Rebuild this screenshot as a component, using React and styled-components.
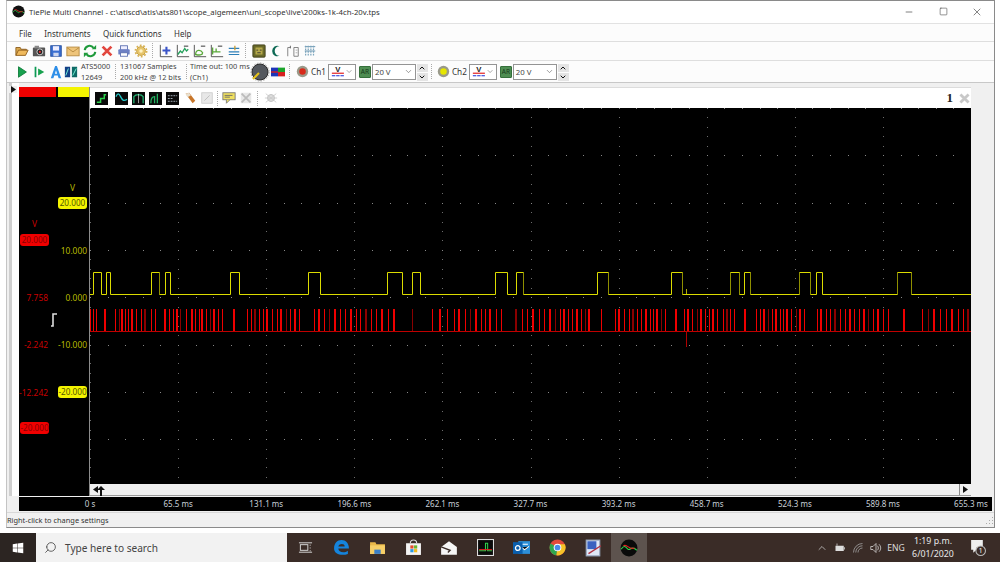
import React from 'react';
import styled, { createGlobalStyle } from 'styled-components';
import { FaWindows } from 'react-icons/fa';
import { ChevronDown, ChevronUp, Search, Minus, Square, X } from 'lucide-react';

const Global = createGlobalStyle`
  html, body { margin: 0; padding: 0; background: #fff; }
  body { font-family: "Noto Sans", "Liberation Sans", sans-serif; font-size: 8px; color: #222; }
`;

const Page = styled.div`
  width: 1000px;
  height: 562px;
  overflow: hidden;
  display: flex;
  flex-direction: column;
  background: #fff;
`;

const Desktop = styled.div`
  flex: 1;
  padding: 0 5px 5px 6px;
  min-height: 0;
  display: flex;
`;

const Win = styled.div`
  flex: 1;
  min-width: 0;
  display: flex;
  flex-direction: column;
  background: #f0f0f0;
  border-right: 1px solid #8a8a8a;
  border-bottom: 1px solid #8a8a8a;
  border-top: 1px solid #8a8a8a;
  border-left: 1px solid #c4c4c4;
`;

const TitleBar = styled.div`
  height: 22px;
  box-sizing: border-box;
  padding: 0 0 1px 5px;
  background: #fff;
  display: flex;
  align-items: center;
  font-size: 7.75px;
  color: #333;
`;

const TitleText = styled.span`
  margin-left: 4px;
  flex: 1;
  white-space: nowrap;
`;

const WinButton = styled.div`
  width: 34px;
  display: flex;
  justify-content: center;
  color: #333;
`;

const MenuBar = styled.div`
  height: 18px;
  box-sizing: border-box;
  padding: 1px 0 0 12px;
  background: #fcfcfc;
  border-top: 1px solid #e2e2e2;
  display: flex;
  align-items: center;
  gap: 12.5px;
  font-size: 8px;
  color: #333;
`;

const ToolRow = styled.div`
  height: ${p => p.$h}px;
  background: #fcfcfc;
  border-top: 1px solid #dedede;
  border-bottom: ${p => (p.$last ? '1px solid #c8c8c8' : '0')};
  display: flex;
  align-items: center;
  padding: 0 0 ${p => (p.$last ? 0 : 1)}px 6px;
  box-sizing: border-box;
`;

const Cell = styled.div`
  width: ${p => p.$w || 17}px;
  height: 16px;
  display: flex;
  align-items: center;
  justify-content: center;
  flex: none;
`;

const Grip = styled.div`
  width: 1px;
  height: 15px;
  margin: 0 ${p => p.$m || 3}px;
  border-left: 1px dotted #aaa;
  flex: none;
`;

const InfoBlock = styled.div`
  font-size: 7.4px;
  line-height: 10.5px;
  color: #444;
  white-space: nowrap;
  flex: none;
  width: ${p => p.$w}px;
  margin-left: ${p => p.$ml}px;
`;

const ChannelLabel = styled.span`
  font-size: 8.2px;
  color: #333;
  margin: 0 2px 0 1px;
  flex: none;
`;

const Select = styled.div`
  width: ${p => p.$w}px;
  height: 16px;
  box-sizing: border-box;
  border: 1px solid #949494;
  background: #fff;
  display: flex;
  align-items: center;
  justify-content: space-between;
  padding: 0 2px;
  margin-right: 1px;
  font-size: 7.8px;
  color: #444;
  flex: none;
`;

const AutoRange = styled.div`
  width: 12px;
  height: 12px;
  margin: 0 1px 0 2px;
  background: #4e8d52;
  border: 1px solid #35703b;
  box-sizing: border-box;
  border-radius: 1px;
  font-size: 6.5px;
  line-height: 10px;
  text-align: center;
  color: #173a1c;
  flex: none;
`;

const Spinner = styled.div`
  width: 11px;
  height: 16px;
  display: flex;
  flex-direction: column;
  gap: 1px;
  flex: none;
`;

const SpinButton = styled.div`
  flex: 1;
  background: #e4e4e4;
  display: flex;
  align-items: center;
  justify-content: center;
  color: #111;
`;

const Workspace = styled.div`
  flex: 1;
  min-height: 0;
  display: flex;
  align-items: stretch;
`;

const Dock = styled.div`
  width: 12px;
  position: relative;
  flex: none;
  background: linear-gradient(90deg, #f0f0f0 0 2px, #cfcfcf 2px 5px, #fff 5px 12px);
`;

const DockArrow = styled.div`
  position: absolute;
  top: 3px;
  left: 2px;
  width: 8px;
  height: 7px;
  background: #f0f0f0;
  display: flex;
  align-items: center;
  justify-content: center;
`;

const ScaleColumn = styled.div`
  width: 71px;
  flex: none;
  background: #000;
  position: relative;
  border-right: 1px solid #8c8c8c;
  box-sizing: border-box;
  margin-top: 4px;
`;

const ColorTabs = styled.div`
  display: flex;
  height: 10px;
  gap: 2px;
`;

const ColorTab = styled.div`
  background: ${p => p.$c};
  flex: ${p => p.$f};
`;

const ScaleText = styled.span`
  position: absolute;
  top: ${p => p.$y - 87 - 5}px;
  right: ${p => 89 - p.$r}px;
  line-height: 12px;
  font-size: 8.4px;
  white-space: nowrap;
  color: ${p => (p.$red ? '#c80000' : '#b9b900')};
`;

const ScalePill = styled.span`
  position: absolute;
  top: ${p => p.$y - 87 - 5}px;
  left: ${p => p.$x - 19}px;
  width: 29px;
  height: 12px;
  box-sizing: border-box;
  border-radius: 3px;
  background: ${p => (p.$red ? '#f00000' : '#f4f400')};
  color: ${p => (p.$red ? '#8a0000' : '#555500')};
  font-size: 8.2px;
  line-height: 12px;
  text-align: center;
  white-space: nowrap;
`;

const TriggerMark = styled.svg`
  position: absolute;
  left: ${50 - 19}px;
  top: ${313 - 87}px;
`;

const PlotColumn = styled.div`
  width: 881px;
  flex: none;
  display: flex;
  flex-direction: column;
  margin-top: 4px;
`;

const PlotTools = styled.div`
  height: 21px;
  flex: none;
  background: #fff;
  border-top: 1px solid #dcdcdc;
  display: flex;
  align-items: center;
  padding-left: 3px;
  box-sizing: border-box;
`;

const PlotIndex = styled.span`
  margin-left: auto;
  font-family: "Liberation Serif", serif;
  font-weight: 700;
  font-size: 13px;
  color: #222;
  margin-right: 4px;
`;

const Plot = styled.svg`
  display: block;
  width: 881px;
  height: 376px;
  flex: none;
  background: #000;
`;

const ScrollBar = styled.div`
  height: 12px;
  flex: none;
  background: #f0f0f0;
  border-bottom: 1px solid #9a9a9a;
  position: relative;
  display: flex;
  justify-content: space-between;
  align-items: center;
  box-sizing: border-box;
`;

const ScrollEnd = styled.div`
  width: ${p => p.$w}px;
  height: 11px;
  display: flex;
  align-items: center;
  justify-content: center;
  border-left: ${p => (p.$b ? '1px solid #8a8a8a' : '0')};
`;

const Marker = styled.svg`
  position: absolute;
  left: 7px;
  top: 2px;
`;

const AxisRow = styled.div`
  height: 14px;
  flex: none;
  margin: 1px 2px 0 12px;
  background: #000;
  display: flex;
  padding-left: 27px;
  overflow: hidden;
`;

const AxisLabel = styled.span`
  width: 88.1px;
  flex: none;
  text-align: center;
  color: #c8d0d8;
  font-size: 8px;
  line-height: 14px;
  white-space: nowrap;
`;

const StatusBar = styled.div`
  height: 14px;
  flex: none;
  margin-top: 1px;
  border-top: 1px solid #d8d8d8;
  display: flex;
  align-items: center;
  justify-content: space-between;
  font-size: 7.4px;
  color: #333;
`;

const TaskBar = styled.div`
  height: 29px;
  flex: none;
  background: #3a2c27;
  display: flex;
  align-items: center;
  color: #eee;
`;

const StartButton = styled.div`
  width: 36px;
  height: 100%;
  background: #2c2522;
  display: flex;
  align-items: center;
  justify-content: center;
  color: #fff;
  flex: none;
`;

const SearchBox = styled.div`
  width: 251px;
  height: 100%;
  background: #f2f2f2;
  display: flex;
  align-items: center;
  padding-left: 8px;
  box-sizing: border-box;
  gap: 8px;
  color: #444;
  font-size: 10.1px;
  flex: none;
`;

const SearchGlass = styled(Search)`
  transform: scaleX(-1);
`;

const TaskApps = styled.div`
  display: flex;
  height: 100%;
  flex: 1;
`;

const TaskApp = styled.div`
  width: 36px;
  height: 100%;
  display: flex;
  align-items: center;
  justify-content: center;
  background: ${p => (p.$active ? '#5d534e' : 'transparent')};
`;

const Tray = styled.div`
  display: flex;
  align-items: center;
  height: 100%;
  width: 187px;
  flex: none;
`;

const TrayIcon = styled.div`
  width: 18px;
  display: flex;
  justify-content: center;
  flex: none;
  margin-left: ${p => p.$ml || 0}px;
`;

const TrayLang = styled.span`
  font-size: 8.6px;
  width: 22px;
  text-align: center;
  color: #ddd;
  flex: none;
`;

const Clock = styled.div`
  width: 52px;
  text-align: center;
  font-size: 8.8px;
  line-height: 13px;
  color: #e8e8e8;
  flex: none;
`;

const Svg = ({ children, s = 14 }) => (
  <svg width={s} height={s} viewBox="0 0 16 16">{children}</svg>
);

const OpenIcon = () => <Svg><path d="M1 13V4h5l1 2h6v2" fill="#d9a94f" stroke="#8a5a1a" /><path d="M1 13l3-6h11l-3 6z" fill="#efb95c" stroke="#8a5a1a" /></Svg>;
const CameraIcon = () => <Svg><rect x="1" y="4" width="14" height="10" rx="1" fill="#555" /><rect x="3" y="2" width="5" height="3" fill="#888" /><circle cx="9" cy="9" r="3.4" fill="#222" stroke="#ddd" /><circle cx="9" cy="9" r="1.2" fill="#d33" /></Svg>;
const SaveIcon = () => <Svg><rect x="2" y="2" width="12" height="12" fill="#3b6fd0" stroke="#1f4a9c" /><rect x="4.5" y="2.5" width="7" height="5" fill="#eef" /><rect x="5" y="10" width="6" height="4" fill="#cfd8ee" /></Svg>;
const MailIcon = () => <Svg><rect x="1" y="3.5" width="14" height="10" fill="#eec47a" stroke="#b5893f" /><path d="M1 4l7 5 7-5" fill="none" stroke="#b5893f" /></Svg>;
const RefreshIcon = () => <Svg><path d="M2 7a5.5 5.5 0 0 1 10-2.5M14 9a5.5 5.5 0 0 1-10 2.5" fill="none" stroke="#1f9a3c" strokeWidth="2.4" /><path d="M10 6h5V1zM6 10H1v5z" fill="#1f9a3c" /></Svg>;
const CrossIcon = () => <Svg><path d="M3 3l10 10M13 3L3 13" stroke="#e2473f" strokeWidth="3.2" /></Svg>;
const PrintIcon = () => <Svg><rect x="4" y="2" width="8" height="5" fill="#eef" stroke="#5b6fb0" /><rect x="1.5" y="6" width="13" height="6" rx="1" fill="#6d80c4" /><rect x="4" y="10" width="8" height="4" fill="#fff" stroke="#5b6fb0" /></Svg>;
const GearIcon = () => <Svg><circle cx="8" cy="8" r="5" fill="#e8c66c" stroke="#c09a3c" strokeWidth="1" /><circle cx="8" cy="8" r="6.4" fill="none" stroke="#d8b050" strokeWidth="2" strokeDasharray="2 2" /><circle cx="8" cy="8" r="2" fill="#fff3c4" /></Svg>;
const PlusIcon = () => <Svg><path d="M1.5 1v13.5H15" fill="none" stroke="#444" /><path d="M8.5 3v9M4 7.5h9" stroke="#3b55c8" strokeWidth="2.4" /></Svg>;
const ChartIcon = ({ c = '#22a05a', d = 'M2 12l3-4 2 2 3-5 2 3 2-2' }) => <Svg><path d="M1.5 1v13.5H15" fill="none" stroke="#444" /><path d={d} fill="none" stroke={c} strokeWidth="1.5" /><path d="M9 2.5h5" stroke="#666" strokeWidth="1.5" /></Svg>;
const SlidersIcon = () => <Svg><path d="M2 5h12M2 9h12M2 12h12" stroke="#2c7fb8" strokeWidth="1.3" /><path d="M9 2v5" stroke="#c89a30" strokeWidth="1.5" /></Svg>;
const ChipIcon = () => <Svg><rect x="1" y="1" width="14" height="14" rx="1" fill="#6a6a2a" stroke="#3c3c18" /><rect x="4" y="4" width="8" height="8" fill="#b5a94a" /><path d="M5 7h2M9 7h2M6 10h4" stroke="#333" /></Svg>;
const MoonIcon = () => <Svg><path d="M12 2.5a6 6 0 1 0 0 11 5 5 0 0 1 0-11z" fill="#0e6a55" /></Svg>;
const GateIcon = () => <Svg><path d="M2 14V4h3M9 4h5v10H9z" fill="none" stroke="#777" /><path d="M5 2v3" stroke="#555" /><path d="M11 7h2M11 10h2" stroke="#aaa" /></Svg>;
const BusIcon = () => <Svg><path d="M2 3h12M2 8h12" stroke="#5a8aa8" strokeWidth="1" /><path d="M3 2v11M6 2v11M9 2v11M12 2v11" stroke="#7ba5bd" strokeWidth="1.4" strokeDasharray="2 1" /></Svg>;
const PlayIcon = () => <Svg><path d="M4 2l9 6-9 6z" fill="#17a14e" stroke="#0d7a38" /></Svg>;
const StepIcon = () => <Svg><path d="M4 2v12" stroke="#0d9a55" strokeWidth="2" /><path d="M7 4l7 4-7 4z" fill="#17a14e" /></Svg>;
const AutoIcon = () => <Svg><path d="M2 15L7 1h2l5 14h-3L8 6l-3 9zM5 10h6v2H5z" fill="#2f8fe8" /></Svg>;
const ModeIcon = () => <Svg><rect x="1" y="2" width="6" height="12" fill="#123f86" /><rect x="9" y="2" width="6" height="12" fill="#0f6a66" /><path d="M2 12l3-8M10 12l4-8" stroke="#7fd" /></Svg>;
const KnobIcon = () => <svg width="20" height="20" viewBox="0 0 20 20"><circle cx="10" cy="10" r="8" fill="#54585e" stroke="#2a2a2a" /><circle cx="10" cy="10" r="9" fill="none" stroke="#999" strokeDasharray="1.5 1.5" /><path d="M3 17l6-6" stroke="#e6c21a" strokeWidth="2" /></svg>;
const TriColor = () => <Svg><rect x="0" y="3" width="8" height="10" fill="#1d35b8" /><rect x="8" y="3" width="8" height="5" fill="#1ca52c" /><rect x="8" y="8" width="8" height="5" fill="#d82020" /><path d="M0 8h8" stroke="#d82020" strokeWidth="1.6" /></Svg>;
const Led = ({ c }) => <Svg s={13}><circle cx="8" cy="8" r="7" fill="#9a9a8a" /><circle cx="8" cy="8" r="4" fill={c} /></Svg>;
const VoltIcon = () => <Svg s={15}><text x="8" y="8" textAnchor="middle" fontSize="9" fontWeight="700" fontFamily="Liberation Sans, sans-serif" fill="#222">V</text><path d="M1 10h14" stroke="#e01010" strokeWidth="1.3" /><path d="M1 13h4M6 13h4M11 13h4" stroke="#1b2fd8" strokeWidth="1.3" /></Svg>;

const Scope = ({ children }) => <svg width="13" height="13" viewBox="0 0 14 14"><rect width="14" height="14" fill="#0a0a0a" />{children}</svg>;
const plotTools = [
  <Scope><path d="M2 11h4V7h4V3h2" fill="none" stroke="#2bd04a" strokeWidth="1.6" /></Scope>,
  null,
  <Scope><path d="M1 5c2-4 3-4 5 0s3 5 7 3" fill="none" stroke="#25c8c8" strokeWidth="1.4" /></Scope>,
  <Scope><path d="M2 12V5c2-3 8-3 10 0v7" fill="none" stroke="#22b070" strokeWidth="1.4" /><path d="M7 2v10" stroke="#eee" strokeWidth=".7" /></Scope>,
  <Scope><path d="M2 12c0-5 2-7 4-7v7M9 2v10" fill="none" stroke="#22b060" strokeWidth="1.4" /></Scope>,
  <Scope><path d="M2 4h10M2 7h6M2 10h10" stroke="#aab4c0" strokeDasharray="2 1" /></Scope>,
  <Svg><path d="M3 3l4-1 7 9-3 3z" fill="#c8762a" /><path d="M3 3l4-1 2 3-4 2z" fill="#e8e0d0" /></Svg>,
  <Svg><rect x="2" y="2" width="12" height="12" fill="#e8e8e8" stroke="#ccc" /><path d="M5 11l6-6" stroke="#bbb" /></Svg>,
  1.5,
  <Svg><rect x="1" y="2" width="14" height="8" fill="#f0e060" stroke="#777" /><path d="M5 10v4l4-4" fill="#f0e060" stroke="#777" /><path d="M3 5h9M3 7h6" stroke="#666" /></Svg>,
  <Svg><rect x="2" y="2" width="12" height="12" fill="#e8e8e8" /><path d="M3 3l10 10M13 3L3 13" stroke="#bcbcbc" strokeWidth="2" /></Svg>,
  3,
  <Svg><circle cx="8" cy="8" r="4" fill="#ddd" stroke="#bbb" /><path d="M2 3l12 10M14 3L2 13M1 8h14" stroke="#ccc" /></Svg>,
];

const axisLabels = ['0 s', '65.5 ms', '131.1 ms', '196.6 ms', '262.1 ms', '327.7 ms', '393.2 ms', '458.7 ms', '524.3 ms', '589.8 ms', '655.3 ms'];

// x positions read from the trace, grouped by the crop they came from
const redA = [16,24,34,61,91,101,110,120,130,140,153,168,180,198,211,241,252,265,275,285,302,320,331,341,352,362,375,388,400,410,447,485,497,510,522,535,547,561,575,588,602,616,630,643,686,702,717,732,750,766,781,797,812,826,842,857,873,890].map(v => 85 + v / 3);
const redB = [7,23,41,96,157,180,201,221,238,255,271,287,302,316,331,347,362,409,425,441,458,476,493,511,524,540,552,565,577,590,603,616,627,664,704,718,733,746,759,772,784,797,810,820,831,842,854,888].map(v => 380 + v / 3);
const redC = [3,28,40,52,65,78,90,101,113,125,145,156,166,177,210,243,256,268,280,292,303,314,325,336,349,362,374,388,425,438,453,466,481,496,511,524,538,552,566,580,594,610,625,638,686,740,758,776,796,814,830,848,865,880].map(v => 675 + v / 3);
const spikes = [...redA, ...redB, ...redC];

const edges = [93,101,106,110,151,159,165,170,230,239,308,320,387,402,412,420,495,507,516,523,597,608,671,682,730,739,744,750,799,810,816,822,897,911];
const dimEdges = [159, 523, 608, 682, 730, 739, 750, 799, 810, 897, 911];
const LOW = 294.5;
const HIGH = 272.5;
const yellowPoints = () => {
  const pts = [`90,${LOW}`];
  edges.forEach((e, i) => {
    const x = e + 0.5;
    const rising = i % 2 === 0;
    pts.push(`${x},${rising ? LOW : HIGH}`, `${x},${rising ? HIGH : LOW}`);
  });
  pts.push(`971,${LOW}`);
  return pts.join(' ');
};

const GridDots = () => {
  const dots = [];
  for (let i = 0; i <= 10; i++) {
    const x = Math.round(90 + 88.1 * i);
    for (let k = 0; k <= 40; k++) {
      dots.push(<rect key={`v${i}-${k}`} x={x} y={Math.round(108 + 9.46 * k)} width="1" height="1" fill="#6c6c6c" />);
    }
  }
  for (let j = 0; j <= 8; j++) {
    const y = Math.round(108 + 47.3 * j);
    for (let k = 0; k <= 50; k++) {
      dots.push(<rect key={`h${j}-${k}`} x={Math.round(90 + 17.62 * k)} y={y} width="1" height="1" fill="#888" />);
    }
  }
  return dots;
};

const Traces = () => (
  <g>
    <GridDots />
    <polyline points={yellowPoints()} fill="none" stroke="#dcdc00" strokeWidth="1" />
    {dimEdges.map(x => <path key={x} d={`M${x + 0.5} ${HIGH}V${LOW}`} stroke="#8f8f00" />)}
    <path d="M686.5 294V289" stroke="#b0b000" />
    <path d="M90 331.5H971" stroke="#c00000" strokeWidth="1" />
    <path d="M686.5 331V347" stroke="#b00000" />
    {spikes.map((x, i) => {
      const wide = i % 3 === 0;
      return (
        <path
          key={i}
          d={`M${Math.round(x) + (wide ? 0 : 0.5)} 331V309`}
          stroke={i % 7 === 5 ? '#8a0000' : '#f00000'}
          strokeWidth={wide ? 2 : 1}
        />
      );
    })}
  </g>
);

const ChromeIcon = () => <Svg s={17}><circle cx="8" cy="8" r="7.5" fill="#e24a3b" /><path d="M8 8L1.5 4.2A7.5 7.5 0 0 0 7 15.4z" fill="#2fa84f" /><path d="M8 8l-1 7.4A7.5 7.5 0 0 0 15 5H8z" fill="#f6c328" /><circle cx="8" cy="8" r="3.6" fill="#fff" /><circle cx="8" cy="8" r="2.7" fill="#4a8be8" /></Svg>;
const taskApps = [
  <Svg s={15}><path d="M1 3h14M1 13h14" stroke="#ddd" /><rect x="2.5" y="5" width="8" height="6" fill="none" stroke="#ddd" /><path d="M13 5v1M13 8v1M13 11v1" stroke="#ddd" /></Svg>,
  <Svg s={17}><path d="M1 9c0-5 3-8 7-8s7 3 7 8H5c0 3 5 5 9 2v3c-5 2-13 1-13-5zM5 7h6c0-3-5-3-6 0z" fill="#1584dc" /></Svg>,
  <Svg s={17}><path d="M1 3h5l1 2h8v9H1z" fill="#eab84a" /><rect x="1" y="6" width="14" height="8" fill="#f6cf68" /><rect x="5" y="10" width="6" height="4" fill="#3a7fc8" /></Svg>,
  <Svg s={17}><rect x="1" y="4" width="14" height="11" fill="#f4f4f4" /><path d="M5 4c0-4 6-4 6 0" fill="none" stroke="#ddd" /><rect x="5" y="6" width="3" height="3" fill="#e24a2a" /><rect x="8.5" y="6" width="3" height="3" fill="#6ab42a" /><rect x="5" y="9.5" width="3" height="3" fill="#2a9ae2" /><rect x="8.5" y="9.5" width="3" height="3" fill="#f2b81a" /></Svg>,
  <Svg s={18}><path d="M1 7l7-5 7 5v7H1z" fill="#f6f6f6" /><path d="M1 7l8 3-2 2" fill="none" stroke="#3a2c27" strokeWidth="1.2" /></Svg>,
  <Svg s={17}><rect x=".5" y=".5" width="15" height="15" fill="#0a0a0a" stroke="#ddd" /><path d="M2 11h6V4h2v7h4" fill="none" stroke="#2bd04a" /><path d="M2 10h12" stroke="#e02020" /></Svg>,
  <Svg s={17}><rect x="5" y="2" width="11" height="12" fill="#2d8fd8" /><path d="M8 5h6M8 8l3 2 4-3" stroke="#fff" /><rect x="0" y="3" width="9" height="11" fill="#0a5fae" /><circle cx="4.5" cy="8.5" r="2.2" fill="none" stroke="#fff" strokeWidth="1.2" /></Svg>,
  <ChromeIcon />,
  <Svg s={18}><rect x="2" y="1" width="12" height="14" fill="#dfe8f6" stroke="#9aa8c0" /><path d="M3 2h8v7H3z" fill="#3a62c0" /><path d="M4 13L15 6" stroke="#b03040" strokeWidth="1.2" /></Svg>,
  <Svg s={18}><circle cx="8" cy="8" r="7.5" fill="#0a0a0a" /><path d="M1 9c3-4 4-2 6 0s3-4 8 1" fill="none" stroke="#2bd04a" /><path d="M3 6c3-2 5 4 10 2" fill="none" stroke="#e02020" /></Svg>,
];

const SelectArrow = () => <ChevronDown size={9} strokeWidth={1.5} color="#555" />;

const Channel = ({ name, led }) => (
  <>
    <Cell $w={15}><Led c={led} /></Cell>
    <ChannelLabel>{name}</ChannelLabel>
    <Select $w={28}><VoltIcon /><SelectArrow /></Select>
    <AutoRange>AR</AutoRange>
    <Select $w={44}>20 V<SelectArrow /></Select>
    <Spinner>
      <SpinButton><ChevronUp size={8} strokeWidth={3} /></SpinButton>
      <SpinButton><ChevronDown size={8} strokeWidth={3} /></SpinButton>
    </Spinner>
  </>
);

export default function App() {
  const row1 = [OpenIcon, CameraIcon, SaveIcon, MailIcon, RefreshIcon, CrossIcon, PrintIcon, GearIcon];
  return (
    <Page>
      <Global />
      <Desktop>
        <Win>
          <TitleBar>
            <Svg s={13}><circle cx="8" cy="8" r="7.5" fill="#111" /><path d="M1 9c3-4 4-2 6 0s3-4 8 1" fill="none" stroke="#2bd04a" /><path d="M3 6c3-2 5 4 10 2" fill="none" stroke="#e02020" /></Svg>
            <TitleText>TiePie Multi Channel - c:\atiscd\atis\ats801\scope_algemeen\uni_scope\live\200ks-1k-4ch-20v.tps</TitleText>
            <WinButton><Minus size={10} strokeWidth={1.5} /></WinButton>
            <WinButton><Square size={9} strokeWidth={1.4} /></WinButton>
            <WinButton><X size={12} strokeWidth={1.2} /></WinButton>
          </TitleBar>
          <MenuBar>
            <span>File</span>
            <span>Instruments</span>
            <span>Quick functions</span>
            <span>Help</span>
          </MenuBar>
          <ToolRow $h={19}>
            {row1.map((I, i) => <Cell key={i}><I /></Cell>)}
            <Grip />
            <Cell><PlusIcon /></Cell>
            <Cell><ChartIcon /></Cell>
            <Cell><ChartIcon c="#5aa83a" d="M3 12c0-6 6-6 8-2 0 3-4 3-8 2z" /></Cell>
            <Cell><ChartIcon c="#5aa83a" d="M3 12V4M3 9h4V5M7 9h5" /></Cell>
            <Cell><SlidersIcon /></Cell>
            <Grip />
            <Cell><ChipIcon /></Cell>
            <Cell><MoonIcon /></Cell>
            <Cell><GateIcon /></Cell>
            <Cell><BusIcon /></Cell>
          </ToolRow>
          <ToolRow $h={23} $last>
            <Cell><PlayIcon /></Cell>
            <Cell><StepIcon /></Cell>
            <Cell><AutoIcon /></Cell>
            <Cell $w={14}><ModeIcon /></Cell>
            <InfoBlock $w={33} $ml={3}>ATS5000<br />12649</InfoBlock>
            <Grip $m={1} />
            <InfoBlock $w={65} $ml={2}>131067 Samples<br />200 kHz @ 12 bits</InfoBlock>
            <Grip $m={1} />
            <InfoBlock $w={59} $ml={1}>Time out: 100 ms<br />(Ch1)</InfoBlock>
            <Cell $w={22}><KnobIcon /></Cell>
            <Cell $w={14}><TriColor /></Cell>
            <Grip $m={4} />
            <Channel name="Ch1" led="#d82a1a" />
            <Grip $m={3} />
            <Channel name="Ch2" led="#e6e600" />
          </ToolRow>
          <Workspace>
            <Dock>
              <DockArrow><svg width="5" height="7" viewBox="0 0 5 7"><path d="M0 0l5 3.5L0 7z" fill="#111" /></svg></DockArrow>
            </Dock>
            <ScaleColumn>
              <ColorTabs>
                <ColorTab $c="#f00000" $f="37" />
                <ColorTab $c="#f4f400" $f="31" />
              </ColorTabs>
              <ScaleText $y={187} $r={75}>V</ScaleText>
              <ScalePill $x={58} $y={202}>20.000</ScalePill>
              <ScaleText $y={223} $r={37} $red>V</ScaleText>
              <ScalePill $x={20} $y={239} $red>20.000</ScalePill>
              <ScaleText $y={250} $r={87}>10.000</ScaleText>
              <ScaleText $y={297} $r={87}>0.000</ScaleText>
              <ScaleText $y={297} $r={48} $red>7.758</ScaleText>
              <TriggerMark width="8" height="14" viewBox="0 0 8 14"><path d="M1 13h2V1h4" fill="none" stroke="#ddd" strokeWidth="1.6" /></TriggerMark>
              <ScaleText $y={344} $r={87}>-10.000</ScaleText>
              <ScaleText $y={344} $r={48} $red>-2.242</ScaleText>
              <ScalePill $x={58} $y={391}>-20.000</ScalePill>
              <ScaleText $y={392} $r={48} $red>-12.242</ScaleText>
              <ScalePill $x={20} $y={427} $red>-20.000</ScalePill>
            </ScaleColumn>
            <PlotColumn>
              <PlotTools>
                {plotTools.map((t, i) => {
                  if (t === null) return <Cell key={i} $w={3} />;
                  if (typeof t === 'number') return <Grip key={i} $m={t} />;
                  return <Cell key={i}>{t}</Cell>;
                })}
                <PlotIndex>1</PlotIndex>
                <Cell $w={14}><Svg s={13}><path d="M3 3l10 10M13 3L3 13" stroke="#c8c8c8" strokeWidth="3.4" /></Svg></Cell>
              </PlotTools>
              <Plot viewBox="90 108 881 376"><Traces /></Plot>
              <ScrollBar>
                <ScrollEnd $w={10}><svg width="5" height="7" viewBox="0 0 5 7"><path d="M5 0L0 3.5 5 7z" fill="#111" /></svg></ScrollEnd>
                <Marker width="8" height="10" viewBox="0 0 8 10"><path d="M4 0l4 4H5v6H3V4H0z" fill="#111" /></Marker>
                <ScrollEnd $w={11} $b><svg width="5" height="7" viewBox="0 0 5 7"><path d="M0 0l5 3.5L0 7z" fill="#111" /></svg></ScrollEnd>
              </ScrollBar>
            </PlotColumn>
          </Workspace>
          <AxisRow>
            {axisLabels.map(l => <AxisLabel key={l}>{l}</AxisLabel>)}
          </AxisRow>
          <StatusBar>
            Right-click to change settings
            <svg width="10" height="10" viewBox="0 0 10 10"><path d="M8 2h1v1H8zM5 5h1v1H5zM8 5h1v1H8zM2 8h1v1H2zM5 8h1v1H5zM8 8h1v1H8z" fill="#aaa" /></svg>
          </StatusBar>
        </Win>
      </Desktop>
      <TaskBar>
        <StartButton><FaWindows size={12} /></StartButton>
        <SearchBox>
          <SearchGlass size={13} strokeWidth={1.5} />
          Type here to search
        </SearchBox>
        <TaskApps>
          {taskApps.map((a, i) => <TaskApp key={i} $active={i === 9}>{a}</TaskApp>)}
        </TaskApps>
        <Tray>
          <TrayIcon><ChevronUp size={12} strokeWidth={1.4} color="#ddd" /></TrayIcon>
          <TrayIcon><Svg s={12}><rect x="2" y="5" width="11" height="7" fill="#ddd" /><path d="M14 7v3M4 2v3" stroke="#ddd" /></Svg></TrayIcon>
          <TrayIcon><Svg s={12}><path d="M2 14a12 12 0 0 1 12-12M5 14a9 9 0 0 1 9-9M8 14a6 6 0 0 1 6-6" fill="none" stroke="#aaa" /></Svg></TrayIcon>
          <TrayIcon><Svg s={12}><path d="M1 6h3l4-4v12l-4-4H1z" fill="none" stroke="#ddd" /><path d="M10 5c1.5 2 1.5 4 0 6M12 3c3 3 3 7 0 10" fill="none" stroke="#ddd" /></Svg></TrayIcon>
          <TrayLang>ENG</TrayLang>
          <Clock>1:19 p.m.<br />6/01/2020</Clock>
          <TrayIcon $ml={9}><Svg s={17}><path d="M2 1h11v9H7l-3 3v-3H2z" fill="#eee" /><circle cx="11" cy="11" r="4.5" fill="#3a2c27" stroke="#bbb" /><text x="11" y="13.5" textAnchor="middle" fontSize="7" fill="#eee" fontFamily="Noto Sans, sans-serif">1</text></Svg></TrayIcon>
        </Tray>
      </TaskBar>
    </Page>
  );
}
